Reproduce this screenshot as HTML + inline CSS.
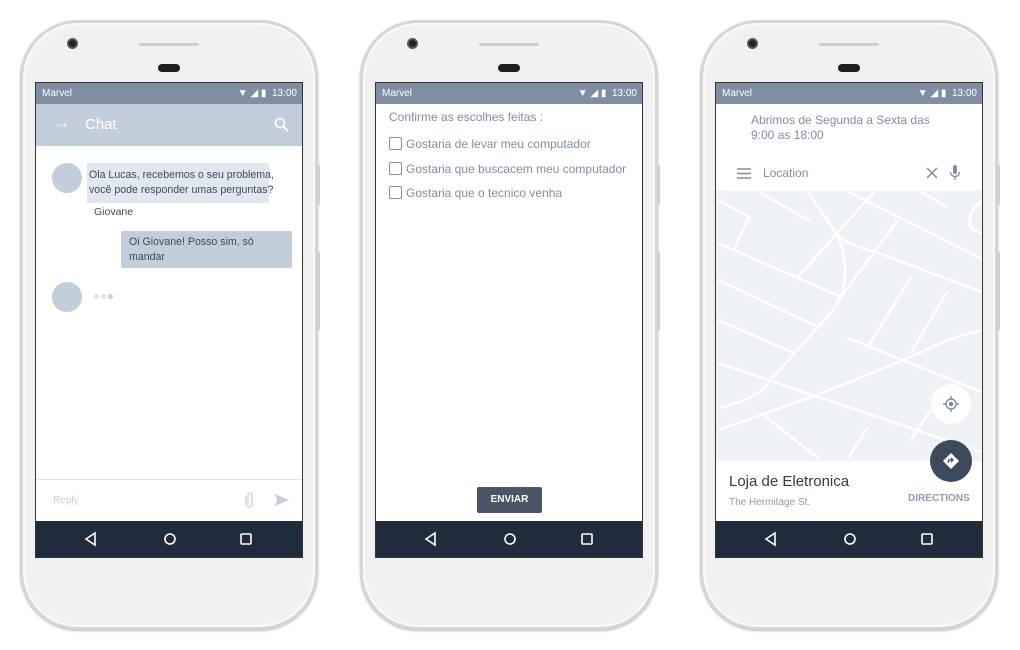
<!DOCTYPE html>
<html><head><meta charset="utf-8"><style>
*{margin:0;padding:0;box-sizing:border-box}
body{width:1020px;height:650px;background:#fff;position:relative;overflow:hidden;font-family:"Liberation Sans",sans-serif}
.ph{position:absolute;top:20px;width:298px;height:610px;border-radius:58px;background:#f1f1f1;border:3px solid #d6d6d6;box-shadow:inset 0 0 0 2px #fafafa,0 1px 2px #bbb}
.btn{position:absolute;width:3px;background:#d0d0d0}
.cam{position:absolute;left:44px;top:15px;width:11px;height:11px;border-radius:50%;background:#222;border:2px solid #555}
.spk{position:absolute;left:116px;top:20px;width:60px;height:3px;border-radius:2px;background:#cfcfcf}
.ear{position:absolute;left:135px;top:41px;width:22px;height:8px;border-radius:4px;background:#1e1e1e}
.scr{position:absolute;top:82px;width:268px;height:476px;background:#fff;border:1px solid #333;overflow:hidden}
.sb{position:absolute;left:0;top:0;width:100%;height:21px;background:#7f8ea3;color:#fff;font-size:10px;line-height:21px;padding:0 6px}
.sb span{position:absolute;right:5px;top:0}
.nav{position:absolute;left:0;bottom:0;width:100%;height:36px;background:#1f2c3b}
.abs{position:absolute}
.cb{display:inline-block;width:13px;height:13px;border:1.5px solid #7f8ea3;border-radius:2px;vertical-align:-2px;margin-right:4px}
</style></head><body>

<!-- phone 1 -->
<div class="ph" style="left:20px"><div class="cam"></div><div class="spk"></div><div class="ear"></div></div>
<div class="btn" style="left:317px;top:165px;height:40px"></div><div class="btn" style="left:317px;top:252px;height:78px"></div>
<div class="scr" style="left:35px">
 <div class="sb">Marvel<span>▼ ◢ ▮ &nbsp;13:00</span></div>
 <div class="abs" style="left:0;top:21px;width:100%;height:42px;background:#c2cedb"></div>
 <div class="abs" style="left:17px;top:30px;color:#fff;font-size:17px">→</div>
 <div class="abs" style="left:49px;top:33px;color:#fff;font-size:15px">Chat</div>
 <svg class="abs" style="left:238px;top:34px" width="16" height="16"><circle cx="6" cy="6" r="4.5" fill="none" stroke="#fff" stroke-width="1.6"/><line x1="9.5" y1="9.5" x2="14" y2="14" stroke="#fff" stroke-width="1.8"/></svg>
 <div class="abs" style="left:16px;top:80px;width:30px;height:30px;border-radius:50%;background:#c2cedb"></div>
 <div class="abs" style="left:51px;top:80px;width:182px;height:40px;background:#e1e7ef;font-size:10.6px;color:#3f4a5a;line-height:15px;padding:5px 2px;white-space:nowrap">Ola Lucas, recebemos o seu problema,<br>você pode responder umas perguntas?</div>
 <div class="abs" style="left:58px;top:123px;font-size:10.5px;color:#3f4a5a">Giovane</div>
 <div class="abs" style="left:85px;top:148px;width:171px;height:37px;background:#c2cedb;border-radius:2px;font-size:10.6px;color:#3f4a5a;line-height:15px;padding:4px 8px">Oi Giovane! Posso sim, só<br>mandar</div>
 <div class="abs" style="left:16px;top:199px;width:30px;height:30px;border-radius:50%;background:#c2cedb"></div>
 <div class="abs" style="left:58px;top:211px;width:5px;height:5px;border-radius:50%;background:#dce3ec"></div>
 <div class="abs" style="left:65px;top:211px;width:5px;height:5px;border-radius:50%;background:#dce3ec"></div>
 <div class="abs" style="left:72px;top:211px;width:5px;height:5px;border-radius:50%;background:#c2cedb"></div>
 <div class="abs" style="left:0;top:396px;width:100%;height:1px;background:#e3e3e3"></div>
 <div class="abs" style="left:17px;top:412px;font-size:10px;color:#c2cedb">Reply</div>
 <svg class="abs" style="left:207px;top:408px" width="12" height="18"><path d="M3 5v8a3 3 0 0 0 6 0V4a2 2 0 0 0-4 0v8" fill="none" stroke="#c2cedb" stroke-width="1.3"/></svg>
 <svg class="abs" style="left:238px;top:410px" width="16" height="14"><path d="M1 1L15 7L1 13L3 7Z" fill="#c2cedb"/></svg>
 <div class="nav"><svg width="268" height="36"><path d="M50 18l9-6v12z" fill="none" stroke="#fff" stroke-width="1.6"/><circle cx="134" cy="18" r="5" fill="none" stroke="#fff" stroke-width="1.6"/><rect x="205" y="13" width="10" height="10" rx="1" fill="none" stroke="#fff" stroke-width="1.6"/></svg></div>
</div>

<!-- phone 2 -->
<div class="ph" style="left:360px"><div class="cam"></div><div class="spk"></div><div class="ear"></div></div>
<div class="btn" style="left:657px;top:165px;height:40px"></div><div class="btn" style="left:657px;top:252px;height:78px"></div>
<div class="scr" style="left:375px">
 <div class="sb">Marvel<span>▼ ◢ ▮ &nbsp;13:00</span></div>
 <div class="abs" style="left:13px;top:27px;font-size:12px;color:#7f8ea3">Confirme as escolhes feitas :</div>
 <div class="abs" style="left:13px;top:49px;font-size:12px;color:#7f8ea3;line-height:24.5px;white-space:nowrap">
  <div><span class="cb"></span>Gostaria de levar meu computador</div>
  <div><span class="cb"></span>Gostaria que buscacem meu computador</div>
  <div><span class="cb"></span>Gostaria que o tecnico venha</div>
 </div>
 <div class="abs" style="left:101px;top:404px;width:65px;height:26px;background:#4a5566;border-radius:2px;color:#fff;font-size:10px;font-weight:bold;text-align:center;line-height:26px">ENVIAR</div>
 <div class="nav"><svg width="268" height="36"><path d="M50 18l9-6v12z" fill="none" stroke="#fff" stroke-width="1.6"/><circle cx="134" cy="18" r="5" fill="none" stroke="#fff" stroke-width="1.6"/><rect x="206" y="13" width="10" height="10" rx="1" fill="none" stroke="#fff" stroke-width="1.6"/></svg></div>
</div>

<!-- phone 3 -->
<div class="ph" style="left:700px"><div class="cam"></div><div class="spk"></div><div class="ear"></div></div>
<div class="btn" style="left:997px;top:165px;height:40px"></div><div class="btn" style="left:997px;top:252px;height:78px"></div>
<div class="scr" style="left:715px">
 <div class="sb">Marvel<span>▼ ◢ ▮ &nbsp;13:00</span></div>
 <div class="abs" style="left:35px;top:30px;font-size:12px;color:#7f8ea3;line-height:15px">Abrimos de Segunda a Sexta das<br>9:00 as 18:00</div>
 <svg class="abs" style="left:0;top:107px" width="268" height="271">
  <rect width="268" height="271" fill="#eef1f6"/>
  <g fill="none" stroke="#fff" stroke-width="2.5">
   <path d="M92 2L120 43Q135 70 125 107Q115 125 102 137L52 193Q40 210 2 218"/>
   <path d="M120 43Q130 55 160 62L268 103"/>
   <path d="M133 2L268 70"/>
   <path d="M158 2L82 87"/>
   <path d="M182 30L125 107"/>
   <path d="M2 53L125 107"/>
   <path d="M2 90L102 137"/>
   <path d="M2 130L78 163"/>
   <path d="M2 173L268 263"/>
   <path d="M2 240Q120 200 210 160Q240 145 268 140"/>
   <path d="M195 87L152 157"/>
   <path d="M232 100L195 163"/>
   <path d="M132 148L268 203"/>
   <path d="M45 223L102 268"/>
   <path d="M152 237L132 268"/>
   <path d="M215 220L195 250"/>
   <path d="M2 10L33 27L18 60"/>
   <path d="M45 3L95 32"/>
   <path d="M205 2L232 17"/>
   <path d="M268 10Q250 20 255 38L268 45"/>
  </g>
 </svg>
 <div class="abs" style="left:7px;top:73px;width:253px;height:35px;background:#fff"></div>
 <svg class="abs" style="left:21px;top:85px" width="14" height="11"><path d="M0 1h14M0 5.5h14M0 10h14" stroke="#7f8ea3" stroke-width="1.5"/></svg>
 <div class="abs" style="left:47px;top:83px;font-size:12px;color:#7f8ea3">Location</div>
 <svg class="abs" style="left:210px;top:84px" width="12" height="12"><path d="M1 1L11 11M11 1L1 11" stroke="#7f8ea3" stroke-width="1.5"/></svg>
 <svg class="abs" style="left:233px;top:82px" width="12" height="16"><rect x="4" y="0" width="4" height="9" rx="2" fill="#7f8ea3"/><path d="M1.5 7a4.5 4.5 0 0 0 9 0M6 11.5V15" fill="none" stroke="#7f8ea3" stroke-width="1.3"/></svg>
 <div class="abs" style="left:0;top:378px;width:100%;height:62px;background:#fff"></div>
 <div class="abs" style="left:215px;top:301px;width:40px;height:40px;border-radius:50%;background:#fff"></div>
 <svg class="abs" style="left:226px;top:312px" width="18" height="18"><circle cx="9" cy="9" r="5" fill="none" stroke="#7f8ea3" stroke-width="1.4"/><circle cx="9" cy="9" r="2.3" fill="#7f8ea3"/><path d="M9 1v3M9 14v3M1 9h3M14 9h3" stroke="#7f8ea3" stroke-width="1.4"/></svg>
 <div class="abs" style="left:214px;top:357px;width:42px;height:42px;border-radius:50%;background:#3d4a5c"></div>
 <svg class="abs" style="left:226px;top:369px" width="18" height="18"><path d="M9 1L17 9L9 17L1 9Z" fill="#fff"/><path d="M6.5 11V8h4M9 6l2 2-2 2" fill="none" stroke="#3d4a5c" stroke-width="1.3"/></svg>
 <div class="abs" style="left:13px;top:390px;font-size:15px;color:#333b47">Loja de Eletronica</div>
 <div class="abs" style="left:13px;top:414px;font-size:10px;color:#8e9bb0">The Hermitage St.</div>
 <div class="abs" style="left:192px;top:410px;font-size:10px;font-weight:bold;color:#8e9bb0">DIRECTIONS</div>
 <div class="nav"><svg width="268" height="36"><path d="M50 18l9-6v12z" fill="none" stroke="#fff" stroke-width="1.6"/><circle cx="134" cy="18" r="5" fill="none" stroke="#fff" stroke-width="1.6"/><rect x="206" y="13" width="10" height="10" rx="1" fill="none" stroke="#fff" stroke-width="1.6"/></svg></div>
</div>
</body></html>
